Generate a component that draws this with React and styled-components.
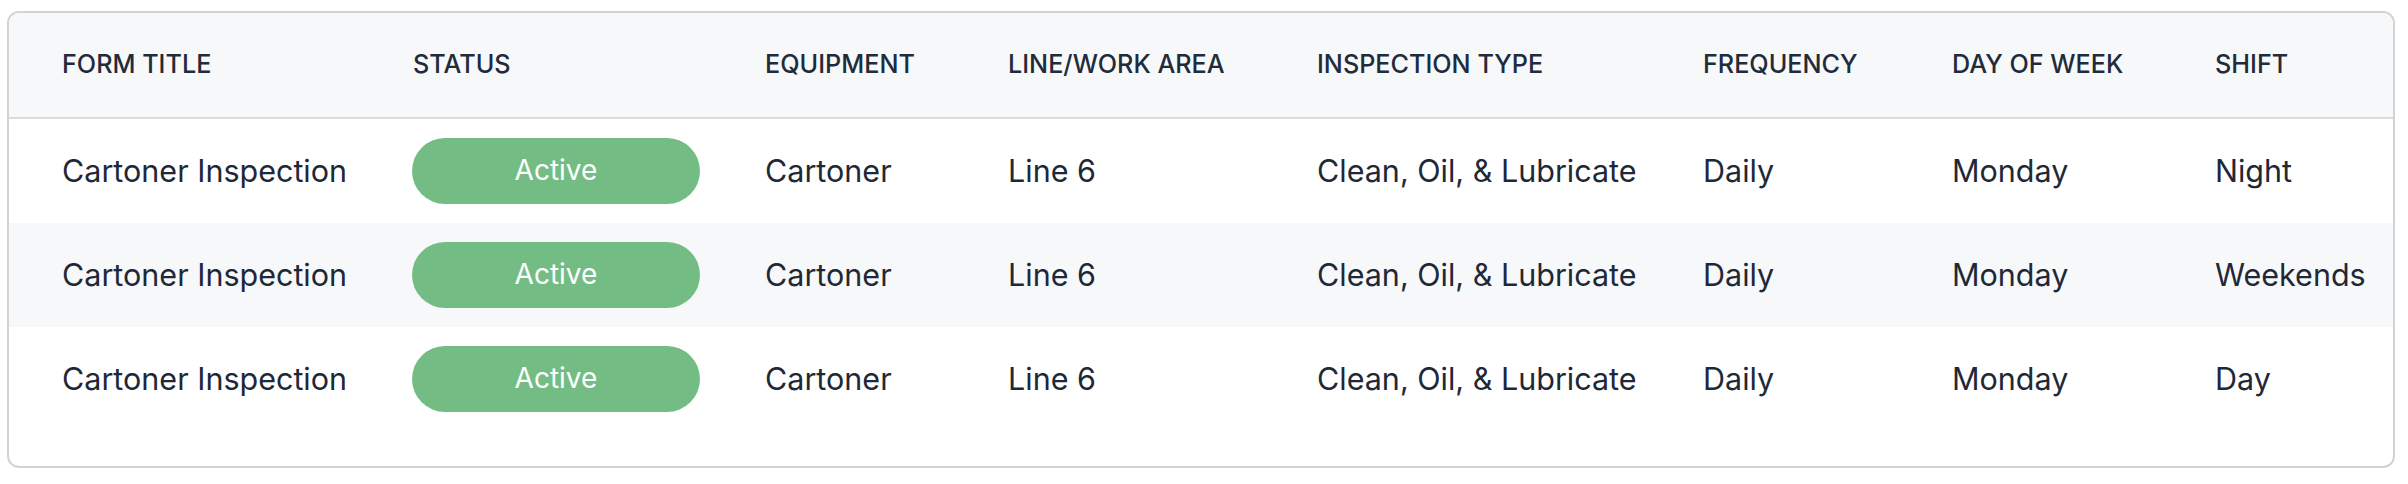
import { createGlobalStyle, styled } from "styled-components"

const GlobalStyle = createGlobalStyle`
body {
    margin: 0;
    padding: 11px 13px 0 7px;
    background: #ffffff;
    font-family: Inter, "Noto Sans", sans-serif;
    color: #1f2837;
}
`

const COLUMNS = "351px 352px 243px 309px 386px 249px 263px 1fr"

const Card = styled.section`
border: 2px solid #d2d3d5;
border-radius: 12px;
overflow: hidden;
padding-bottom: 35px;
background: #ffffff;
`

const HeaderRow = styled.div`
display: grid;
grid-template-columns: ${COLUMNS};
align-items: center;
height: 106px;
padding-left: 53px;
padding-bottom: 3px;
box-sizing: border-box;
background: #f7f8fa;
border-bottom: 2px solid #dadbdd;
`

const HeaderCell = styled.div`
font-size: 25.2px;
font-weight: 500;
text-transform: uppercase;
color: #222b3a;
white-space: nowrap;
`

const Row = styled.div`
display: grid;
grid-template-columns: ${COLUMNS};
align-items: center;
height: 104px;
padding-left: 53px;
background: ${({ $striped }) => ($striped ? "#f7f8fa" : "#ffffff")};
`

const Cell = styled.div`
font-size: 30.5px;
line-height: 1.2;
color: #1f2837;
white-space: nowrap;
`

const StatusPill = styled.span`
display: flex;
align-items: center;
justify-content: center;
width: 288px;
height: 66px;
margin-left: -1px;
border-radius: 33px;
background: #73bd84;
color: #ffffff;
font-size: 28px;
`

const headers = ["Form Title", "Status", "Equipment", "Line/Work Area", "Inspection Type", "Frequency", "Day of Week", "Shift"]

const rows = [
    { title: "Cartoner Inspection", status: "Active", equipment: "Cartoner", line: "Line 6", type: "Clean, Oil, & Lubricate", frequency: "Daily", day: "Monday", shift: "Night" },
    { title: "Cartoner Inspection", status: "Active", equipment: "Cartoner", line: "Line 6", type: "Clean, Oil, & Lubricate", frequency: "Daily", day: "Monday", shift: "Weekends" },
    { title: "Cartoner Inspection", status: "Active", equipment: "Cartoner", line: "Line 6", type: "Clean, Oil, & Lubricate", frequency: "Daily", day: "Monday", shift: "Day" },
]

const App = () => {
    return (
        <>
        <GlobalStyle />
        <Card>
            <HeaderRow>
                {headers.map((h) => <HeaderCell key={h}>{h}</HeaderCell>)}
            </HeaderRow>
            {rows.map((row, index) => (
                <Row key={index} $striped={index % 2 === 1}>
                    <Cell>{row.title}</Cell>
                    <Cell><StatusPill>{row.status}</StatusPill></Cell>
                    <Cell>{row.equipment}</Cell>
                    <Cell>{row.line}</Cell>
                    <Cell>{row.type}</Cell>
                    <Cell>{row.frequency}</Cell>
                    <Cell>{row.day}</Cell>
                    <Cell>{row.shift}</Cell>
                </Row>
            ))}
        </Card>
        </>
    )
}

export default App
